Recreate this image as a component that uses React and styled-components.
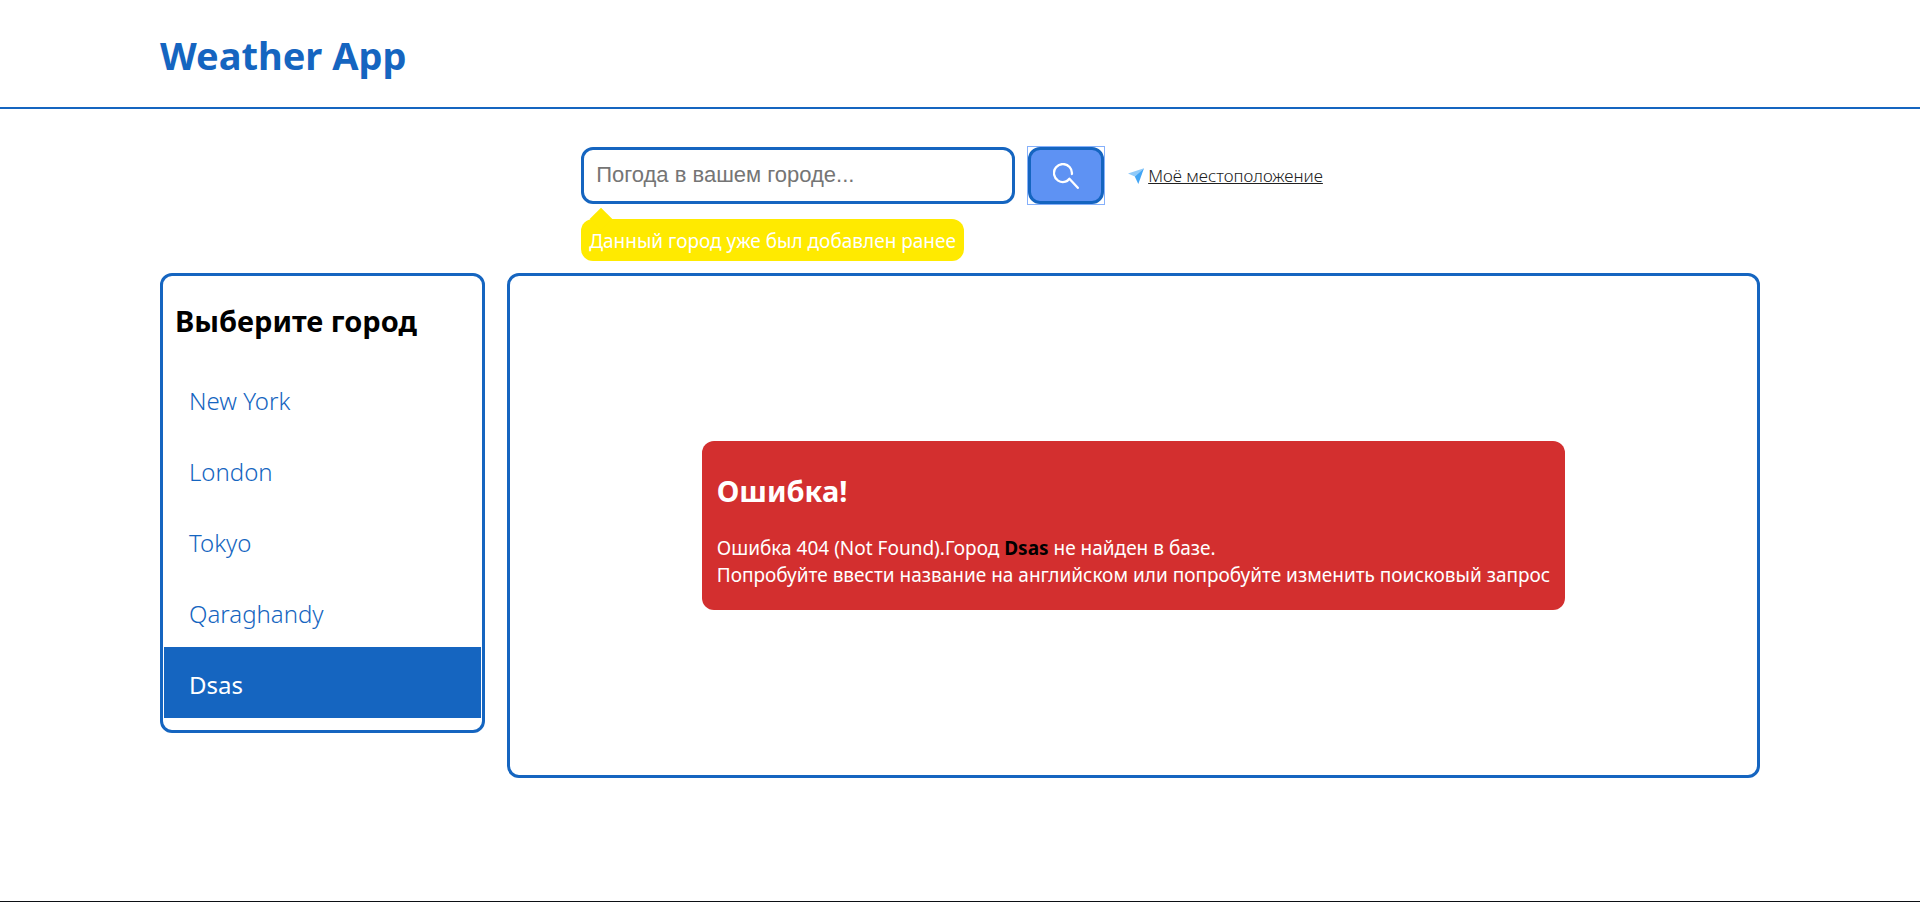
import React, { useState } from "react";
import styled, { createGlobalStyle } from "styled-components";

const BLUE = "#1565c0";

const GlobalStyle = createGlobalStyle`
  *, *::before, *::after { box-sizing: border-box; }
  body {
    margin: 0;
    background: #fff;
    color: #000;
    font-family: "Segoe UI", "Noto Sans", sans-serif;
  }
`;

const Page = styled.div`
  min-height: 100vh;
  border-bottom: 1px solid #0c0f14;
`;

const Container = styled.div`
  width: 100%;
  max-width: 1640px;
  margin: 0 auto;
  padding: 0 20px;
`;

const Header = styled.header`
  padding: 28px 0 25px;
  border-bottom: 2px solid ${BLUE};
`;

const Title = styled.h1`
  margin: 0;
  color: ${BLUE};
  font-size: 38px;
  line-height: 54px;
`;

const SearchForm = styled.form`
  display: flex;
  justify-content: center;
  align-items: center;
  gap: 12px;
  margin: 37px 0 68px;
`;

const Field = styled.div`
  position: relative;
  flex: 0 1 434px;
`;

const SearchInput = styled.input`
  display: block;
  width: 100%;
  height: 57px;
  padding: 0 12px 2px;
  border: 3px solid ${BLUE};
  border-radius: 12px;
  background: #fff;
  font-family: Arial, "Liberation Sans", sans-serif;
  font-size: 22px;

  &::placeholder { color: #757575; }
`;

const Tooltip = styled.div`
  position: absolute;
  top: 72px;
  left: 0;
  padding: 9px 8px 7px;
  border-radius: 12px;
  background: #ffea00;
  color: #fff;
  font-size: 19px;
  line-height: 26px;
  white-space: nowrap;

  &::before {
    content: "";
    position: absolute;
    top: -8px;
    left: 12px;
    width: 16px;
    height: 16px;
    background: #ffea00;
    transform: rotate(45deg);
  }
`;

const TooltipText = styled.span`
  position: relative;
`;

const FocusFrame = styled.div`
  border: 1px solid #85b0fb;
`;

const SearchButton = styled.button`
  display: flex;
  align-items: center;
  justify-content: center;
  width: 76px;
  height: 57px;
  padding: 0;
  border: 3px solid ${BLUE};
  border-radius: 12px;
  background: #5e92f3;
  cursor: pointer;
`;

const LocationLink = styled.a`
  display: flex;
  align-items: center;
  gap: 4px;
  padding: 1px 16px 0 11px;
  color: #212121;
  font-size: 17px;
  font-weight: 300;
  line-height: 24px;
  text-decoration: none;
`;

const LinkText = styled.span`
  text-decoration: underline;
`;

const Main = styled.main`
  display: flex;
  align-items: flex-start;
  gap: 22px;
`;

const Panel = styled.section`
  border: 3px solid ${BLUE};
  border-radius: 12px;
`;

const CityPanel = styled(Panel)`
  flex: 0 0 325px;
  padding: 25px 1px 12px;
`;

const CityHeading = styled.h2`
  margin: 0 0 22px;
  padding: 0 11px;
  font-size: 29px;
  line-height: 40px;
`;

const CityList = styled.ul`
  margin: 0;
  padding: 0;
  list-style: none;
`;

const CityButton = styled.button`
  display: block;
  width: 100%;
  padding: 22px 25px 17px;
  border: 0;
  background: ${({ $active }) => ($active ? BLUE : "transparent")};
  color: ${({ $active }) => ($active ? "#fff" : BLUE)};
  font-family: inherit;
  font-size: 24px;
  font-weight: ${({ $active }) => ($active ? 400 : 300)};
  line-height: 32px;
  text-align: left;
  cursor: pointer;
`;

const WeatherPanel = styled(Panel)`
  display: flex;
  flex: 1;
  align-items: center;
  justify-content: center;
  min-height: 505px;
`;

const ErrorCard = styled.div`
  padding: 30px 15px 21px;
  border-radius: 12px;
  background: #d32f2f;
  color: #fff;
`;

const ErrorTitle = styled.h2`
  margin: 0 0 24px;
  font-size: 29px;
  line-height: 40px;
`;

const ErrorText = styled.p`
  margin: 0;
  font-size: 19px;
  line-height: 27px;
`;

const CityName = styled.strong`
  color: #000;
`;

const SearchIcon = () => (
  <svg width="26" height="26" viewBox="0 0 26 26" fill="none" stroke="#fff" strokeWidth="2.3" strokeLinecap="round" strokeLinejoin="round" aria-hidden="true">
    <path d="M18.9 11A9 9 0 1 0 12.4 18.7Q14.8 18 16.4 15.8L24.8 24.8" />
  </svg>
);

const PlaneIcon = () => (
  <svg width="16" height="16" viewBox="0 0 16 16" aria-hidden="true">
    <path d="M0 5.4L16 .2L6.8 8.4Z" fill="#90caf9" />
    <path d="M16 .2L10.3 16L6.8 8.4Z" fill="#42a5f5" />
  </svg>
);

const CITIES = ["New York", "London", "Tokyo", "Qaraghandy", "Dsas"];

export default function App() {
  const [city, setCity] = useState("Dsas");

  return (
    <Page>
      <GlobalStyle />
      <Header>
        <Container>
          <Title>Weather App</Title>
        </Container>
      </Header>
      <Container>
        <SearchForm onSubmit={(e) => e.preventDefault()}>
          <Field>
            <SearchInput type="text" aria-label="Город" aria-describedby="city-hint" placeholder="Погода в вашем городе..." />
            <Tooltip id="city-hint" role="status">
              <TooltipText>Данный город уже был добавлен ранее</TooltipText>
            </Tooltip>
          </Field>
          <FocusFrame>
            <SearchButton type="submit" aria-label="Найти">
              <SearchIcon />
            </SearchButton>
          </FocusFrame>
          <LocationLink href="#location">
            <PlaneIcon />
            <LinkText>Моё местоположение</LinkText>
          </LocationLink>
        </SearchForm>
        <Main>
          <CityPanel>
            <CityHeading>Выберите город</CityHeading>
            <CityList>
              {CITIES.map((name) => (
                <li key={name}>
                  <CityButton type="button" $active={name === city} onClick={() => setCity(name)}>
                    {name}
                  </CityButton>
                </li>
              ))}
            </CityList>
          </CityPanel>
          <WeatherPanel>
            <ErrorCard role="alert">
              <ErrorTitle>Ошибка!</ErrorTitle>
              <ErrorText>
                Ошибка 404 (Not Found).Город <CityName>Dsas</CityName> не найден в базе.
                <br />
                Попробуйте ввести название на английском или попробуйте изменить поисковый запрос
              </ErrorText>
            </ErrorCard>
          </WeatherPanel>
        </Main>
      </Container>
    </Page>
  );
}
